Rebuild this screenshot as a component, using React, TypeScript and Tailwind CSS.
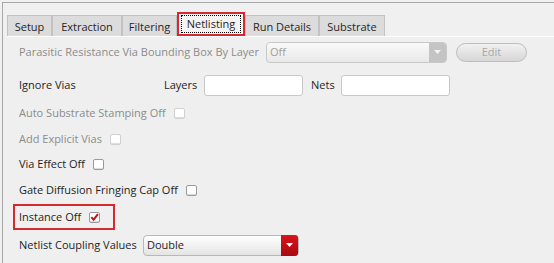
import { useState } from "react";

const tabs = [
  { name: "Setup", w: "w-[45px]" },
  { name: "Extraction", w: "w-[70px]" },
  { name: "Filtering", w: "w-[55px]" },
  { name: "Netlisting", w: "w-[68px]" },
  { name: "Run Details", w: "w-[74px]" },
  { name: "Substrate", w: "w-[66px]" },
];

function Check({ checked, disabled }: { checked?: boolean; disabled?: boolean }) {
  return (
    <span
      className={`ml-[8px] inline-flex h-[11px] w-[11px] items-center justify-center rounded-[2px] border bg-white ${
        disabled ? "border-[#d0d0d0]" : "border-[#9a9a9a]"
      } shadow-[inset_0_-1px_0_#ddd]`}
    >
      {checked && (
        <svg width="10" height="10" viewBox="0 0 10 10">
          <path d="M1.5 5.2 L4 8 L8.8 1.8" fill="none" stroke="#c4101a" strokeWidth="2.2" />
        </svg>
      )}
    </span>
  );
}

export default function App() {
  const [active] = useState("Netlisting");
  return (
    <div
      className="h-[263px] w-[554px] overflow-hidden whitespace-nowrap bg-[#f0f0f0] pl-[2px] pt-[2px] text-[11px] text-[#1e1e1e]"
      style={{ fontFamily: '"Open Sans", sans-serif' }}
    >
      <div className="h-full border-l border-t border-[#a8a8a8] pl-[4px] pt-[10px]">
        <div className="flex h-[23px] items-end">
          {tabs.map((t) => {
            const sel = t.name === active;
            return sel ? (
              <div key={t.name} className={`${t.w} h-[24px] border-2 border-[#d42a30] bg-[#f4f4f4] px-[2px] pb-[1px] pt-[1px]`}>
                <div className="border border-dotted border-black text-center leading-[16px]">{t.name}</div>
              </div>
            ) : (
              <div
                key={t.name}
                className={`${t.w} h-[21px] border border-b-0 border-[#c2c2c2] bg-[#dcdcdc] text-center leading-[21px] text-[#262626]`}
              >
                {t.name}
              </div>
            );
          })}
        </div>
        <div className="h-full border-t border-white bg-[#efefef] pl-[12px]">
          <div className="mt-[4px] flex h-[22px] items-center text-[#8c8c8c]">
            <span className="w-[247px]">Parasitic Resistance Via Bounding Box By Layer</span>
            <div className="flex h-[21px] w-[181px] items-center rounded-[4px] border border-[#c8c8c8] bg-gradient-to-b from-[#fafafa] to-[#e8e8e8] pl-[3px]">
              <span className="flex-1 text-[#a0a0a0]">Off</span>
              <span className="flex h-full w-[17px] items-center justify-center rounded-r-[3px] bg-[#c4c4c4]">
                <svg width="7" height="4" viewBox="0 0 7 4">
                  <path d="M0 0 H7 L3.5 4 Z" fill="#f4f4f4" />
                </svg>
              </span>
            </div>
            <div className="ml-[9px] flex h-[19px] w-[71px] items-center justify-center rounded-full border border-[#bdbdbd] bg-gradient-to-b from-[#f2f2f2] to-[#d6d6d6] text-[#a8a8a8]">
              Edit
            </div>
          </div>
          <div className="mt-[11px] flex h-[22px] items-center">
            <span className="w-[145px]">Ignore Vias</span>
            <span className="w-[40px]">Layers</span>
            <span className="h-[21px] w-[99px] rounded-[3px] border border-[#c8c8c8] bg-white" />
            <span className="ml-[8px] w-[30px]">Nets</span>
            <span className="h-[21px] w-[109px] rounded-[3px] border border-[#c8c8c8] bg-white" />
          </div>
          <div className="mt-[6px] flex h-[22px] items-center text-[#8c8c8c]">
            Auto Substrate Stamping Off
            <Check disabled />
          </div>
          <div className="mt-[4px] flex h-[22px] items-center text-[#8c8c8c]">
            Add Explicit Vias
            <Check disabled />
          </div>
          <div className="mt-[3px] flex h-[22px] items-center">
            Via Effect Off
            <Check />
          </div>
          <div className="mt-[4px] flex h-[22px] items-center">
            Gate Diffusion Fringing Cap Off
            <Check />
          </div>
          <div className="-ml-[6px] mt-[3px] flex h-[26px] w-[102px] items-center border-2 border-[#d42a30] pl-[4px]">
            Instance Off
            <Check checked />
          </div>
          <div className="mt-[4px] flex h-[22px] items-center">
            <span className="w-[124px]">Netlist Coupling Values</span>
            <div className="flex h-[21px] w-[156px] items-center rounded-[4px] border border-[#b8b8b8] bg-gradient-to-b from-[#ffffff] to-[#e4e4e4] pl-[3px]">
              <span className="flex-1">Double</span>
              <span className="flex h-[21px] w-[17px] items-center justify-center rounded-r-[3px] bg-gradient-to-b from-[#d8141c] to-[#a80a10]">
                <svg width="7" height="4" viewBox="0 0 7 4">
                  <path d="M0 0 H7 L3.5 4 Z" fill="#ffffff" />
                </svg>
              </span>
            </div>
          </div>
        </div>
      </div>
    </div>
  );
}
